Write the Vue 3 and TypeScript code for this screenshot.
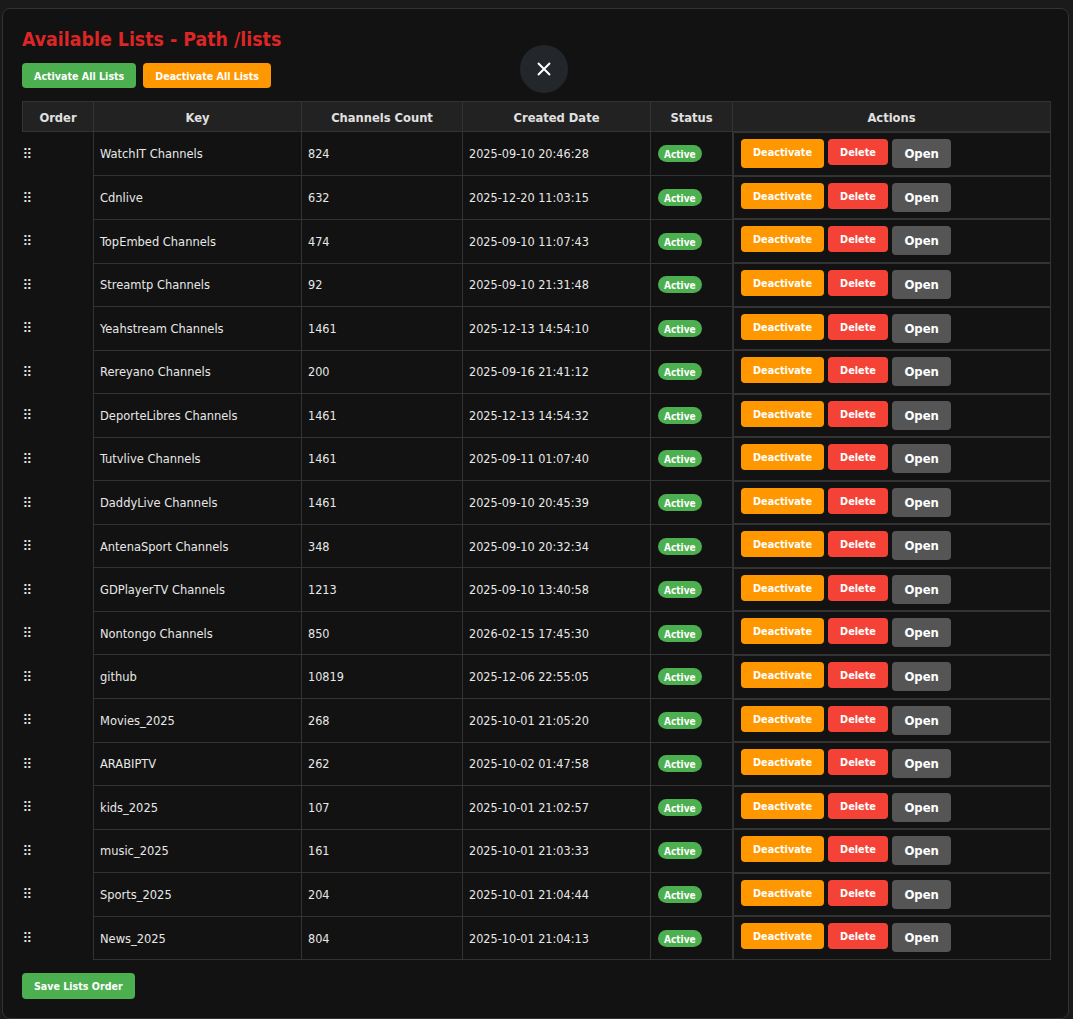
<script setup lang="ts">
interface ListRow { key: string; count: number; date: string }
const rows: ListRow[] = [
  { key: 'WatchIT Channels', count: 824, date: '2025-09-10 20:46:28' },
  { key: 'Cdnlive', count: 632, date: '2025-12-20 11:03:15' },
  { key: 'TopEmbed Channels', count: 474, date: '2025-09-10 11:07:43' },
  { key: 'Streamtp Channels', count: 92, date: '2025-09-10 21:31:48' },
  { key: 'Yeahstream Channels', count: 1461, date: '2025-12-13 14:54:10' },
  { key: 'Rereyano Channels', count: 200, date: '2025-09-16 21:41:12' },
  { key: 'DeporteLibres Channels', count: 1461, date: '2025-12-13 14:54:32' },
  { key: 'Tutvlive Channels', count: 1461, date: '2025-09-11 01:07:40' },
  { key: 'DaddyLive Channels', count: 1461, date: '2025-09-10 20:45:39' },
  { key: 'AntenaSport Channels', count: 348, date: '2025-09-10 20:32:34' },
  { key: 'GDPlayerTV Channels', count: 1213, date: '2025-09-10 13:40:58' },
  { key: 'Nontongo Channels', count: 850, date: '2026-02-15 17:45:30' },
  { key: 'github', count: 10819, date: '2025-12-06 22:55:05' },
  { key: 'Movies_2025', count: 268, date: '2025-10-01 21:05:20' },
  { key: 'ARABIPTV', count: 262, date: '2025-10-02 01:47:58' },
  { key: 'kids_2025', count: 107, date: '2025-10-01 21:02:57' },
  { key: 'music_2025', count: 161, date: '2025-10-01 21:03:33' },
  { key: 'Sports_2025', count: 204, date: '2025-10-01 21:04:44' },
  { key: 'News_2025', count: 804, date: '2025-10-01 21:04:13' },
]
</script>

<template>
  <div class="page">
    <section class="card">
      <h2 class="title">Available Lists - Path /lists</h2>
      <div class="bulk">
        <button class="btn green">Activate All Lists</button>
        <button class="btn orange">Deactivate All Lists</button>
      </div>
      <button class="close" aria-label="Close">
        <svg width="16" height="16" viewBox="0 0 16 16" fill="none" stroke="#fff" stroke-width="2">
          <path d="M2 2 L14 14 M14 2 L2 14" />
        </svg>
      </button>
      <table class="lists">
        <colgroup>
          <col class="c-order" />
          <col class="c-key" />
          <col class="c-count" />
          <col class="c-date" />
          <col class="c-status" />
          <col />
        </colgroup>
        <thead>
          <tr>
            <th>Order</th>
            <th>Key</th>
            <th>Channels Count</th>
            <th>Created Date</th>
            <th>Status</th>
            <th>Actions</th>
          </tr>
        </thead>
        <tbody>
          <tr v-for="(row, i) in rows" :key="row.key">
            <td class="handle">⠿</td>
            <td>{{ row.key }}</td>
            <td class="num">{{ row.count }}</td>
            <td class="num">{{ row.date }}</td>
            <td><span class="badge">Active</span></td>
            <td class="actions">
              <button class="btn orange wide" :class="{ tall: i === 0 }">Deactivate</button>
              <button class="btn red wide">Delete</button>
              <button class="btn grey">Open</button>
            </td>
          </tr>
        </tbody>
      </table>
      <button class="btn green save">Save Lists Order</button>
    </section>
  </div>
</template>

<style>
html, body { margin: 0; background: #1a1a1a; }
</style>

<style scoped>
.page {
  padding: 8px 4px 0 2px;
  font-family: "DejaVu Sans", sans-serif;
  font-stretch: condensed;
  color: #e8e8e8;
}
.card {
  position: relative;
  box-sizing: border-box;
  height: 1011px;
  padding: 19px 19px 0 19px;
  background: #121212;
  border: 1px solid #333;
  border-radius: 8px;
}
.title {
  margin: 0 0 12px;
  font-size: 19.35px;
  line-height: 23px;
  font-weight: 700;
  color: #dc2626;
}
.bulk { display: flex; gap: 7px; margin-bottom: 13.4px; }
.btn {
  border: 0;
  border-radius: 4px;
  color: #fff;
  font-family: inherit;
  font-stretch: condensed;
  font-weight: 700;
  font-size: 10.6px;
  line-height: 13px;
  padding: 7px 12px 6px;
  box-sizing: border-box;
}
.bulk .btn { height: 25px; padding: 7px 12px 5px; }
.wide { font-size: 10.8px; }
.green { background: #4caf50; }
.orange { background: #ff9800; }
.red { background: #f44336; }
.grey { background: #555; font-size: 13px; line-height: 15px; padding: 7px 12.5px; }
.tall { padding-bottom: 9px; padding-top: 7px; height: 29px; }
.close {
  position: absolute;
  left: 517px;
  top: 36px;
  width: 48px;
  height: 48px;
  padding: 0;
  border: 0;
  border-radius: 50%;
  background: #23262b;
  display: flex;
  align-items: center;
  justify-content: center;
}
.lists {
  width: 1029px;
  table-layout: fixed;
  border-collapse: collapse;
  font-size: 12.75px;
}
.c-order { width: 71px; }
.c-key { width: 208px; }
.c-count { width: 161px; }
.c-date { width: 188px; }
.c-status { width: 82px; }
th, td { border: 1px solid #333; padding: 7px; text-align: left; }
th {
  background: #222;
  text-align: center;
  font-size: 12.8px;
  line-height: 15px;
  font-weight: 700;
  color: #e0e0e0;
  padding: 8px 7px 6px;
}
td { height: 43.55px; box-sizing: border-box; padding: 0 6px; }
.num { font-size: 12.55px; }
.handle { border: 0; padding: 0; font-size: 14px; line-height: 20px; }
.badge {
  display: inline-block;
  margin-left: 1px;
  padding: 3px 6px 1px;
  border-radius: 10px;
  background: #4caf50;
  color: #fff;
  font-size: 10px;
  line-height: 13px;
  font-weight: 700;
}
.actions {
  display: flex;
  align-items: flex-start;
  gap: 4px;
  padding: 6px 7px;
  border: 1px solid #333;
}
.save { margin-top: 12.6px; height: 26px; padding: 7px 12px 5px; }
</style>
